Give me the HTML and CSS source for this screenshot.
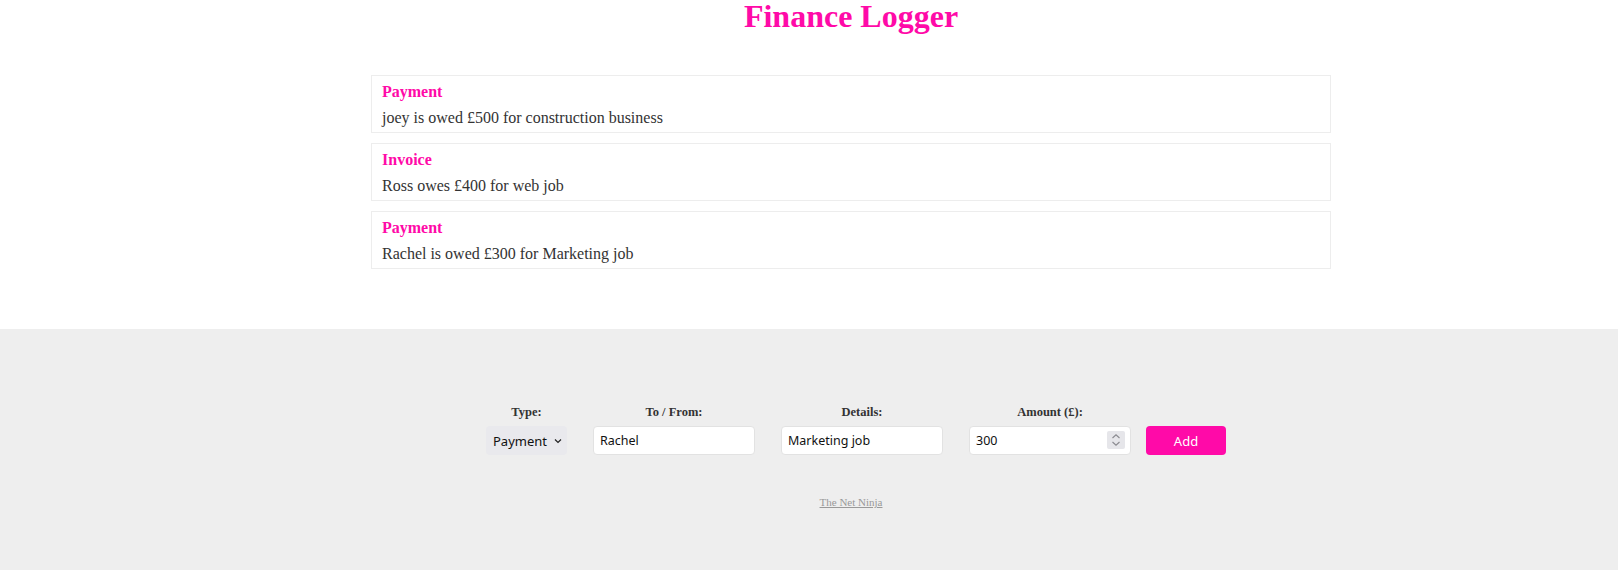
FILE: index.html
```html
<!DOCTYPE html>
<html lang="en">
<head>
<meta charset="utf-8">
<title>Finance Logger</title>
<link rel="stylesheet" href="styles.css">
</head>
<body>
<main class="top">
  <h1 class="title">Finance Logger</h1>
  <ul class="items">
    <li class="item">
      <h4 class="item-type">Payment</h4>
      <p class="item-text">joey is owed £500 for construction business</p>
    </li>
    <li class="item">
      <h4 class="item-type">Invoice</h4>
      <p class="item-text">Ross owes £400 for web job</p>
    </li>
    <li class="item">
      <h4 class="item-type">Payment</h4>
      <p class="item-text">Rachel is owed £300 for Marketing job</p>
    </li>
  </ul>
</main>
<footer class="bottom">
  <div class="bottom-inner">
    <form class="new-item-form">
      <div class="field field-type">
        <label class="field-label">Type:</label>
        <div class="select-wrap">
          <select class="select">
            <option>Payment</option>
            <option>Invoice</option>
          </select>
          <svg class="select-arrow" width="8" height="6" viewBox="0 0 8 6"><path d="M1 1.5 L4 4.5 L7 1.5" fill="none" stroke="#222" stroke-width="1.2"/></svg>
        </div>
      </div>
      <div class="field">
        <label class="field-label">To / From:</label>
        <input class="input" type="text" value="Rachel">
      </div>
      <div class="field">
        <label class="field-label">Details:</label>
        <input class="input" type="text" value="Marketing job">
      </div>
      <div class="field">
        <label class="field-label">Amount (£):</label>
        <div class="number-wrap">
          <input class="input input-number" type="number" value="300">
          <span class="spinner">
            <svg width="18" height="18" viewBox="0 0 18 18"><path d="M5.5 7 L9 3.8 L12.5 7" fill="none" stroke="#8a8a8f" stroke-width="1.1"/><path d="M5.5 11 L9 14.2 L12.5 11" fill="none" stroke="#8a8a8f" stroke-width="1.1"/></svg>
          </span>
        </div>
      </div>
      <button class="add-btn" type="button">Add</button>
    </form>
    <a class="credit" href="#">The Net Ninja</a>
  </div>
</footer>
</body>
</html>
```
FILE: styles.css
```css
html, body {
  margin: 0;
  padding: 0;
}
body {
  font-family: "Liberation Serif", "Times New Roman", serif;
  color: #333;
  background: #fff;
}
.top {
  width: 960px;
  margin-left: 371px;
  height: 329px;
}
.title {
  margin: 0;
  font-size: 32px;
  line-height: 32px;
  text-align: center;
  color: #ff0aa8;
  font-weight: bold;
}
.items {
  list-style: none;
  margin: 43px 0 0;
  padding: 0;
  display: flex;
  flex-direction: column;
  gap: 10px;
}
.item {
  border: 1px solid #ededed;
  padding: 7px 10px 5px;
}
.item-type {
  margin: 0 0 8px;
  font-size: 16px;
  color: #ff0aa8;
  font-weight: bold;
}
.item-text {
  margin: 0;
  font-size: 16px;
  color: #333;
}
.bottom {
  background: #eeeeee;
  height: 241px;
  box-sizing: border-box;
  padding-top: 76px;
}
.bottom-inner {
  width: 960px;
  margin-left: 371px;
  display: flex;
  flex-direction: column;
  align-items: center;
}
.new-item-form {
  display: flex;
  align-items: flex-end;
  padding-left: 10px;
}
.field {
  display: flex;
  flex-direction: column;
  align-items: center;
  margin-right: 26px;
}
.field:nth-child(4) {
  margin-right: 15px;
}
.field-label {
  font-size: 12.5px;
  line-height: 14px;
  font-weight: bold;
  color: #333;
  margin-bottom: 7px;
}
.select-wrap, .number-wrap {
  position: relative;
}
.select {
  appearance: none;
  -webkit-appearance: none;
  width: 81px;
  height: 29px;
  border: 0;
  border-radius: 4px;
  background: #e9e9ed;
  font-family: "Noto Sans", "Open Sans", sans-serif;
  font-size: 13px;
  color: #111;
  padding: 0 0 0 7px;
  margin: 0;
  display: block;
}
.select-arrow {
  position: absolute;
  right: 5px;
  top: 12px;
  pointer-events: none;
}
.input {
  box-sizing: border-box;
  width: 162px;
  height: 29px;
  border: 1px solid #e2e2e2;
  border-radius: 4px;
  background: #fff;
  font-family: "Noto Sans", "Open Sans", sans-serif;
  font-size: 12.5px;
  color: #111;
  padding: 0 6px;
  margin: 0;
  display: block;
}
.input-number {
  appearance: textfield;
  -moz-appearance: textfield;
}
.input-number::-webkit-inner-spin-button,
.input-number::-webkit-outer-spin-button {
  -webkit-appearance: none;
  margin: 0;
}
.spinner {
  position: absolute;
  right: 6px;
  top: 5px;
  width: 18px;
  height: 18px;
  background: #e6e6ea;
  border-radius: 2px;
  display: block;
}
.spinner svg {
  display: block;
}
.add-btn {
  width: 80px;
  height: 29px;
  border: 0;
  border-radius: 4px;
  background: #ff0aa8;
  color: #fff;
  font-family: "Noto Sans", "Open Sans", sans-serif;
  font-size: 13px;
  padding: 0;
  margin: 0;
}
.credit {
  margin-top: 41px;
  font-size: 11px;
  color: #999;
  text-decoration: underline;
}
```
